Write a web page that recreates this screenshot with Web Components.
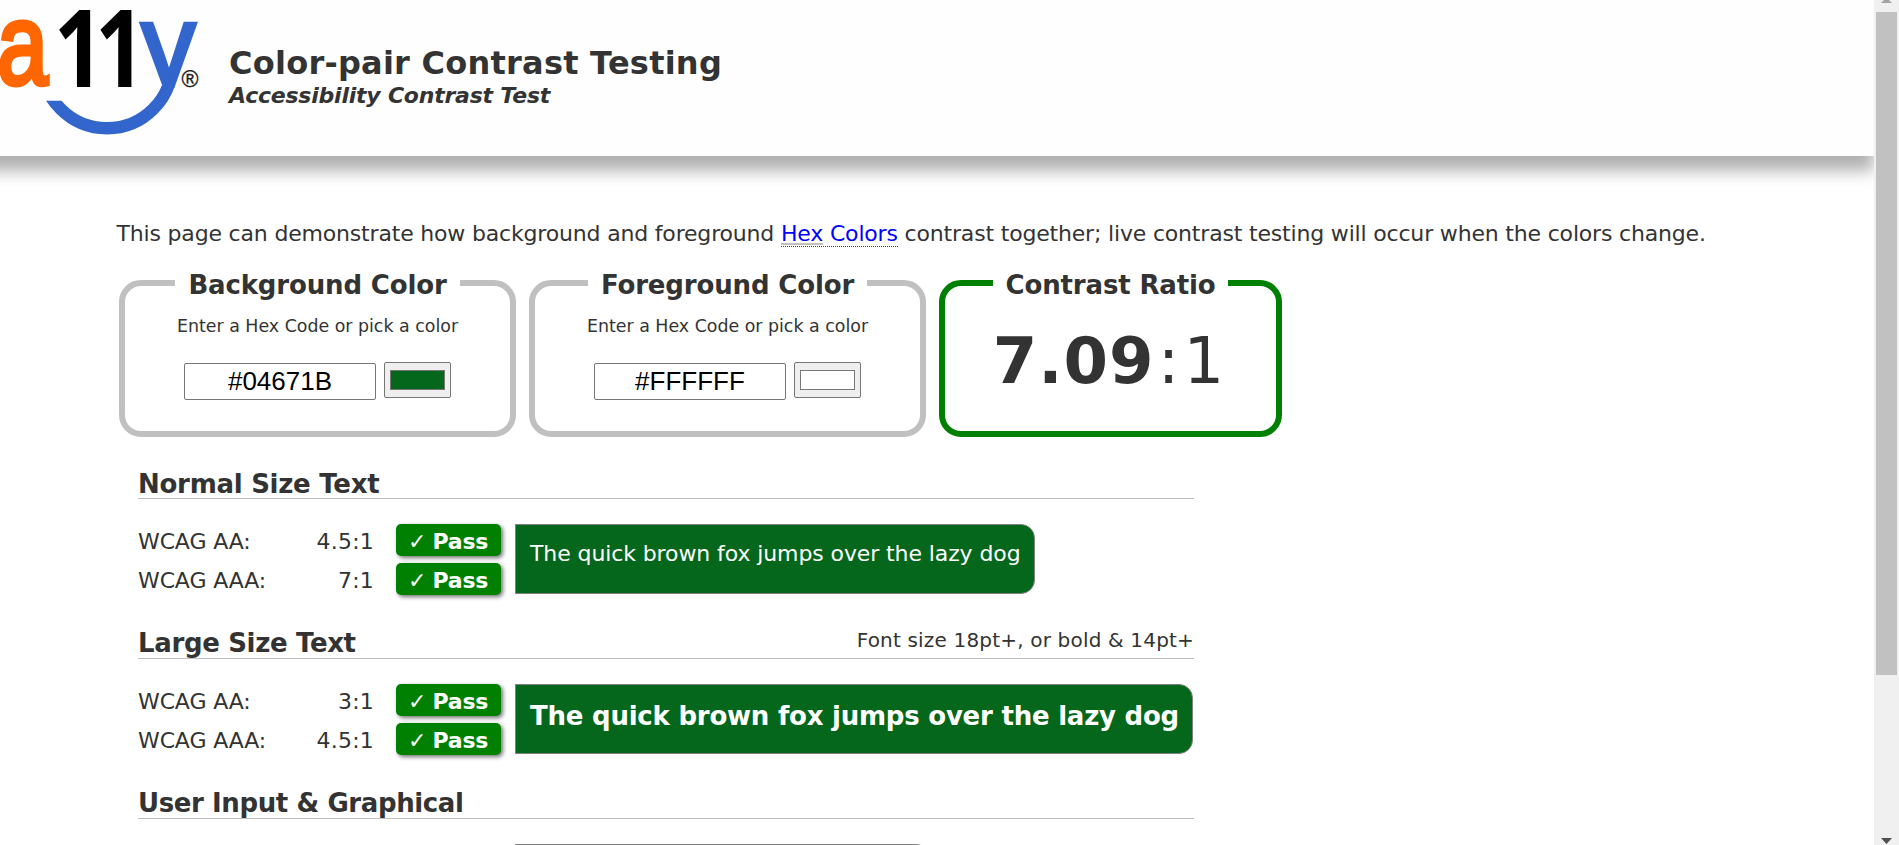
<!DOCTYPE html>
<html lang="en">
<head>
<meta charset="utf-8">
<title>Color-pair Contrast Testing</title>
<style>
html,body{margin:0;height:100%;background:#fff;overflow:hidden}
body{font-family:"DejaVu Sans",Verdana,sans-serif;color:#333}
</style>
</head>
<body>
<contrast-app></contrast-app>
<script>
function define(name, html) {
  const t = document.createElement('template');
  t.innerHTML = html;
  customElements.define(name, class extends HTMLElement {
    constructor() {
      super();
      this.attachShadow({mode: 'open'}).append(t.content.cloneNode(true));
    }
  });
}

define('a11y-logo', `
<style>:host{display:block;width:200px;height:140px}svg{display:block;overflow:visible}</style>
<svg width="200" height="140" viewBox="0 0 200 140" role="img" aria-label="a11y">
  <defs>
    <clipPath id="arms"><rect x="130" y="21.7" width="70" height="66.3"/></clipPath>
    <clipPath id="smile"><path d="M30 100.7H107V86H190V140H30Z"/></clipPath>
  </defs>
  <g font-family="Liberation Sans,Arial,sans-serif">
    <text transform="translate(-2.8 84.4) scale(.79 1)" font-size="115" fill="#f60" stroke="#f60" stroke-width="5">a</text>
    <g font-family="Open Sans,sans-serif" font-weight="700" font-size="108" fill="#000">
      <text transform="translate(54 86.5) scale(.81 1)">1</text>
      <text transform="translate(95.3 86.5) scale(.81 1)">1</text>
    </g>
    <g clip-path="url(#arms)"><text transform="translate(140.8 85) scale(.935 1)" font-size="118" fill="#36c" stroke="#36c" stroke-width="4">y</text></g>
    <circle cx="107" cy="63" r="65.3" fill="none" stroke="#36c" stroke-width="12.4" clip-path="url(#smile)"/>
    <text x="181.5" y="87" font-size="23" fill="#222" stroke="#222" stroke-width=".3">®</text>
  </g>
</svg>`);

define('site-header', `
<style>
:host{display:flex;box-sizing:border-box;height:156px;margin-left:-20px;padding-left:20px;background:#fefefe;box-shadow:0 15px 15px rgba(0,0,0,.31)}
.t{padding:44px 0 0 29px}
h1{margin:0;font-size:32px;line-height:38px;letter-spacing:.24px}
p{margin:0;font-size:22px;line-height:28px;font-weight:700;font-style:italic;letter-spacing:-.22px}
</style>
<a11y-logo></a11y-logo>
<div class="t"><h1><slot name="title"></slot></h1><p><slot></slot></p></div>`);

define('intro-text', `
<style>
:host{display:block;font-size:22px;line-height:29px;letter-spacing:-.18px;white-space:nowrap}
a{color:#00f;text-decoration:none;border-bottom:1px dotted #33c}
abbr{text-decoration:underline solid silver 2px;text-underline-offset:2px;text-decoration-skip-ink:none}
</style>This page can demonstrate how background and foreground <a><abbr>Hex</abbr> Colors</a> contrast together; live contrast testing will occur when the colors change.`);

define('field-box', `
<style>
:host{display:block;width:397px}
fieldset{box-sizing:border-box;margin:0;padding:0;min-width:0;height:171px;border:6px solid var(--edge,silver);border-radius:22px;text-align:center}
legend{margin:0 auto;padding:4px 13px 0;font-size:26px;line-height:30px;font-weight:700;letter-spacing:-.15px}
</style>
<fieldset><legend><slot name="legend"></slot></legend><slot></slot></fieldset>`);

define('color-field', `
<style>
:host{display:block;padding-top:14px}
p{margin:0 0 24px;font-size:17.4px;line-height:24px}
.r{display:flex;justify-content:center;align-items:flex-start;gap:8px}
.i{box-sizing:border-box;width:192px;height:37px;margin-top:1px;border:1px solid #767676;border-radius:2px;background:#fff;color:#000;font:26px/35px "Liberation Sans",Arial,sans-serif}
.c{box-sizing:border-box;width:67px;height:36px;padding:7px 5px;border:1px solid #767676;border-radius:2px;background:#efefef}
.c i{display:block;box-sizing:border-box;height:20px;border:1px solid #777;background:var(--pick)}
</style>
<p>Enter a Hex Code or pick a color</p>
<div class="r"><div class="i" role="textbox"><slot></slot></div><div class="c"><i></i></div></div>`);

define('ratio-value', `
<style>
:host{display:block;margin-top:26px;font-size:64px;line-height:70px;white-space:nowrap}
b{letter-spacing:.9px}
span{margin-left:3.5px;letter-spacing:4px}
</style><b><slot></slot></b><span>:1</span>`);

define('pass-badge', `
<style>
:host{display:flex;box-sizing:border-box;width:105px;height:32px;padding:1px 0 0 12px;border-radius:5px;background:green;color:#fff;font-size:22px;line-height:33px;box-shadow:2px 2px 4px rgba(0,0,0,.55);white-space:pre}
i{font-style:normal;width:24.5px;font-weight:700}
b{letter-spacing:-.2px}
</style><i>✓</i><b>Pass</b>`);

define('level-row', `
<style>
:host{display:grid;grid-template-columns:130px 106px 105px;height:32px;font-size:22px;line-height:35px;white-space:nowrap}
.n{letter-spacing:-.12px}
.v{text-align:right;letter-spacing:.2px}
pass-badge{margin-left:22px}
</style>
<span class="n"><slot></slot></span><span class="v"><slot name="ratio"></slot></span><pass-badge></pass-badge>`);

define('sample-text', `
<style>
:host{display:block;box-sizing:border-box;height:70px;padding:15px 14px 0;border:1px solid gray;border-radius:0 14px 14px 0;background:#04671b;color:#fff;font-size:22px;line-height:28px;letter-spacing:-.1px;white-space:nowrap}
:host([large]){font-size:26px;line-height:32px;font-weight:700;letter-spacing:-.23px}
</style><slot></slot>`);

define('result-section', `
<style>
:host{display:block;height:160px}
header{display:flex;justify-content:space-between;box-sizing:border-box;height:30px;border-bottom:1px solid silver}
h2{margin:0;font-size:26px;line-height:var(--lead,30px);letter-spacing:var(--track,-.27px)}
.note{font-size:20px;line-height:22px;letter-spacing:.18px}
.body{display:flex;align-items:flex-start;gap:14px;margin-top:25px}
.rows{display:grid;gap:7px;width:363px}
</style>
<header><h2><slot name="title"></slot></h2><span class="note"><slot name="note"></slot></span></header>
<div class="body"><div class="rows"><slot></slot></div><slot name="sample"></slot></div>`);

define('page-scrollbar', `
<style>
:host{display:flex;flex-direction:column;align-items:center;width:25px;height:100%;background:#f0f0f0}
.t{width:21px;height:663px;background:#c1c1c1}
svg{display:block}
.d{margin-top:auto}
</style>
<svg width="11" height="12"><path d="M3 0H8L11 3H0Z" fill="#a3a3a3"/></svg>
<div class="t"></div>
<svg class="d" width="11" height="7"><path d="M0 0H11L5.5 6Z" fill="#505050"/></svg>`);

define('contrast-app', `
<style>
:host{display:grid;grid-template-columns:1fr 25px;height:100vh;overflow:hidden}
.page{overflow:hidden;min-width:0;height:100vh}
main{padding:63px 0 0 116.5px}
.fields{display:flex;gap:13px;margin:18px 0 32px 2.5px}
.ok{--edge:green;width:343px}
.results{width:1056px;margin-left:21.5px}
</style>
<div class="page">
  <site-header><span slot="title">Color-pair Contrast Testing</span>Accessibility Contrast Test</site-header>
  <main>
    <intro-text></intro-text>
    <div class="fields">
      <field-box><span slot="legend">Background Color</span><color-field style="--pick:#04671b">#04671B</color-field></field-box>
      <field-box><span slot="legend">Foreground Color</span><color-field style="--pick:#fff">#FFFFFF</color-field></field-box>
      <field-box class="ok"><span slot="legend">Contrast Ratio</span><ratio-value>7.09</ratio-value></field-box>
    </div>
    <div class="results">
      <result-section>
        <span slot="title">Normal Size Text</span>
        <level-row>WCAG AA:<span slot="ratio">4.5:1</span></level-row>
        <level-row>WCAG AAA:<span slot="ratio">7:1</span></level-row>
        <sample-text slot="sample" style="width:520px">The quick brown fox jumps over the lazy dog</sample-text>
      </result-section>
      <result-section style="--track:-.34px;--lead:29px">
        <span slot="title">Large Size Text</span><span slot="note">Font size 18pt+, or bold &amp; 14pt+</span>
        <level-row>WCAG AA:<span slot="ratio">3:1</span></level-row>
        <level-row>WCAG AAA:<span slot="ratio">4.5:1</span></level-row>
        <sample-text slot="sample" large style="width:678px">The quick brown fox jumps over the lazy dog</sample-text>
      </result-section>
      <result-section style="--track:-.4px;--lead:29px">
        <span slot="title">User Input &amp; Graphical</span>
        <sample-text slot="sample" style="width:415px"></sample-text>
      </result-section>
    </div>
  </main>
</div>
<page-scrollbar></page-scrollbar>`);
</script>
</body>
</html>
